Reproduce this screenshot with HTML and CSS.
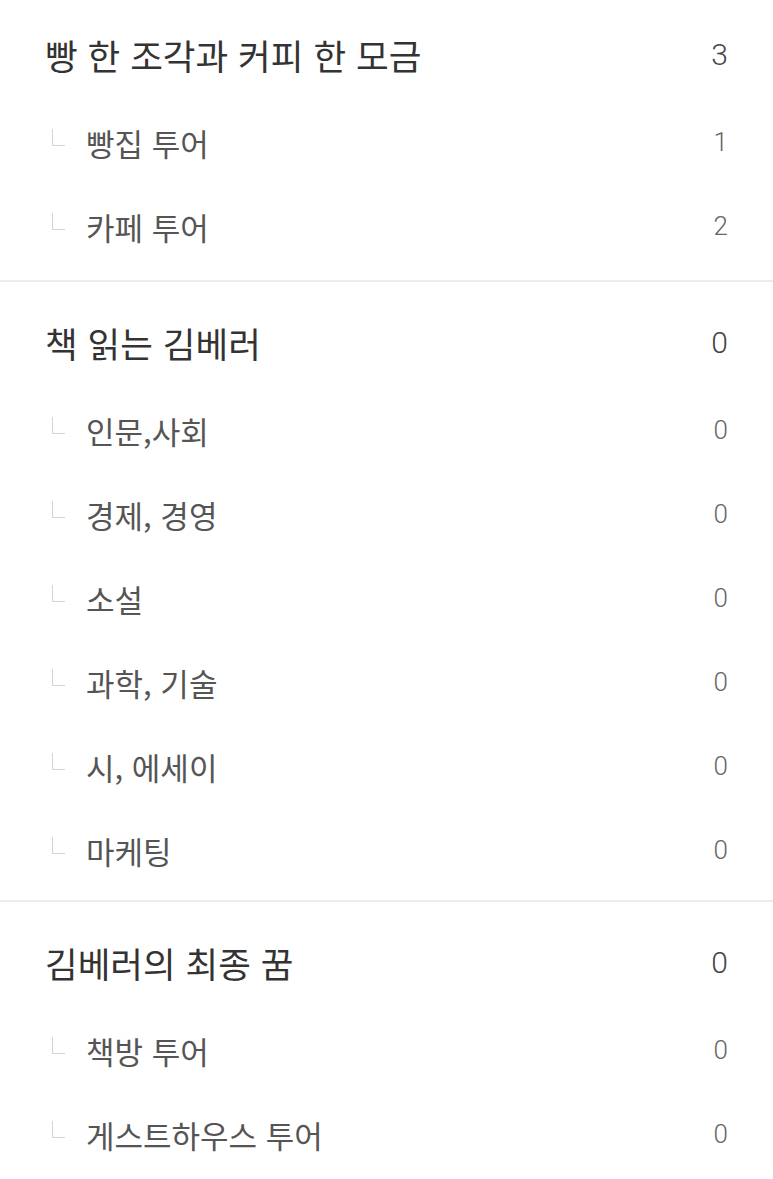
FILE: index.html
```html
<!DOCTYPE html>
<html lang="ko">
<head>
<meta charset="utf-8">
<link rel="stylesheet" href="styles.css">
</head>
<body>
<div class="list">
  <section class="group">
    <div class="row head"><span class="name">빵 한 조각과 커피 한 모금</span><span class="count">3</span></div>
    <div class="row sub"><span class="name"><i class="corner"></i>빵집 투어</span><span class="count">1</span></div>
    <div class="row sub"><span class="name"><i class="corner"></i>카페 투어</span><span class="count">2</span></div>
  </section>
  <section class="group">
    <div class="row head"><span class="name">책 읽는 김베러</span><span class="count">0</span></div>
    <div class="row sub"><span class="name"><i class="corner"></i>인문,사회</span><span class="count">0</span></div>
    <div class="row sub"><span class="name"><i class="corner"></i>경제, 경영</span><span class="count">0</span></div>
    <div class="row sub"><span class="name"><i class="corner"></i>소설</span><span class="count">0</span></div>
    <div class="row sub"><span class="name"><i class="corner"></i>과학, 기술</span><span class="count">0</span></div>
    <div class="row sub"><span class="name"><i class="corner"></i>시, 에세이</span><span class="count">0</span></div>
    <div class="row sub"><span class="name"><i class="corner"></i>마케팅</span><span class="count">0</span></div>
  </section>
  <section class="group">
    <div class="row head"><span class="name">김베러의 최종 꿈</span><span class="count">0</span></div>
    <div class="row sub"><span class="name"><i class="corner"></i>책방 투어</span><span class="count">0</span></div>
    <div class="row sub"><span class="name"><i class="corner"></i>게스트하우스 투어</span><span class="count">0</span></div>
  </section>
</div>
</body>
</html>
```

FILE: styles.css
```css
html, body {
  margin: 0;
  padding: 0;
  background: #fff;
}
body {
  font-family: "Roboto", "Noto Sans CJK KR", sans-serif;
  width: 773px;
  overflow: hidden;
}
.list {
  display: flex;
  flex-direction: column;
}
.group {
  display: flex;
  flex-direction: column;
  padding: 16px 0 10px;
  border-bottom: 2px solid #ececec;
}
.group:first-child {
  padding: 10px 0 14px;
}
.row {
  display: flex;
  align-items: center;
  justify-content: space-between;
  padding: 0 45px;
}
.head {
  height: 88px;
}
.sub {
  height: 84px;
  padding-top: 4px;
  box-sizing: border-box;
}
.name {
  display: flex;
  align-items: center;
  white-space: nowrap;
  font-family: "Noto Sans CJK KR", sans-serif;
}
.head .name {
  font-size: 35.5px;
  color: #333;
}
.sub .name {
  font-size: 31px;
  color: #555;
}
.corner {
  display: block;
  width: 12px;
  height: 16px;
  margin: 0 21px 10px 7px;
  border-left: 1.5px solid #d4d4d4;
  border-bottom: 1.5px solid #d4d4d4;
}
.count {
  font-weight: 300;
}
.head .count {
  font-size: 30px;
  color: #444;
}
.sub .count {
  font-size: 26px;
  color: #666;
}
```
